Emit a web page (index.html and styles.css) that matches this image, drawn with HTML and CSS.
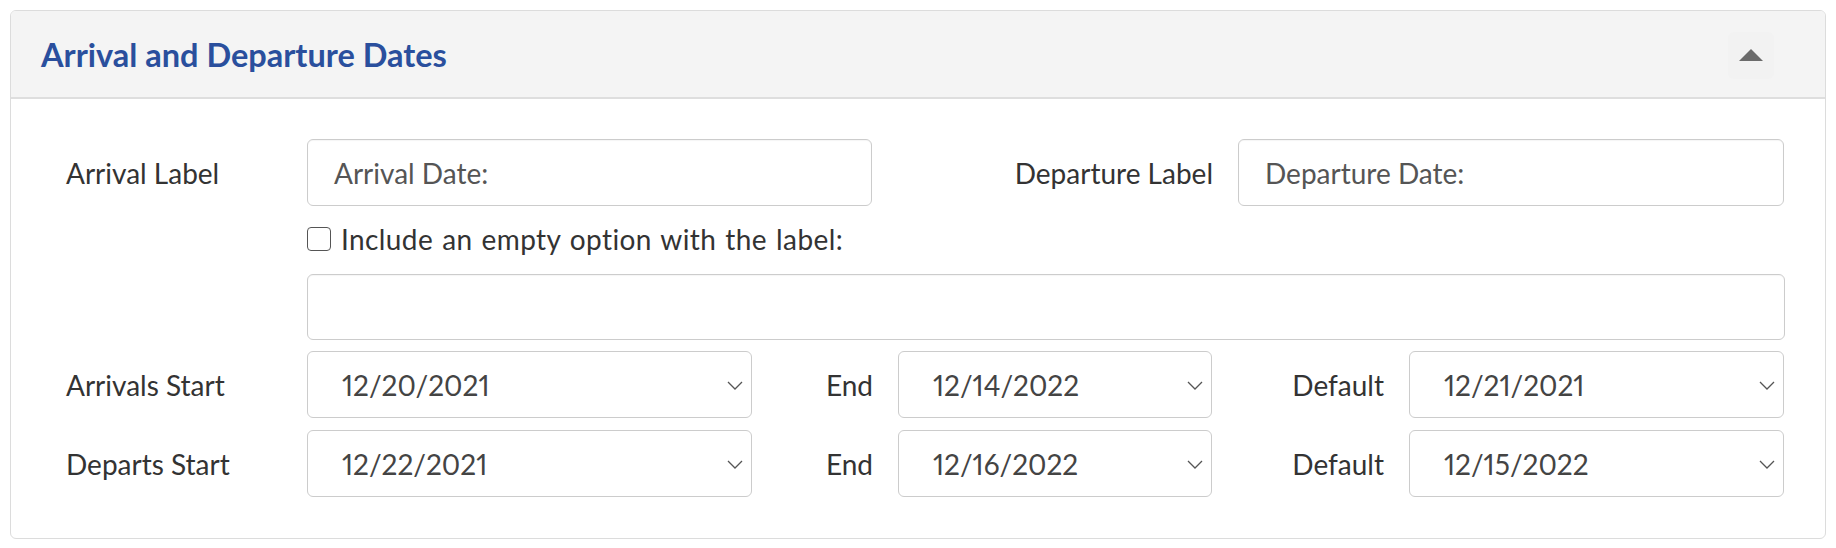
FILE: index.html
```html
<!DOCTYPE html>
<html>
<head>
<meta charset="utf-8">
<link rel="stylesheet" href="styles.css">
</head>
<body>
<div class="panel">
  <div class="panel-head">
    <h2 class="title">Arrival and Departure Dates</h2>
    <button class="collapse" type="button" aria-label="Collapse">
      <svg width="24" height="12" viewBox="0 0 24 12"><polygon points="12,0 24,12 0,12" fill="#6b6b6b"/></svg>
    </button>
  </div>
  <div class="panel-body">
    <div class="row row-labels">
      <label class="lbl">Arrival Label</label>
      <div class="field">Arrival Date:</div>
      <label class="lbl lbl-right">Departure Label</label>
      <div class="field">Departure Date:</div>
    </div>
    <div class="row row-check">
      <span></span>
      <label class="check"><span class="box"></span>Include an empty option with the label:</label>
    </div>
    <div class="row row-empty">
      <span></span>
      <div class="field"></div>
    </div>
    <div class="row row-dates">
      <label class="lbl">Arrivals Start</label>
      <div class="select"><span>12/20/2021</span><svg class="chev" width="16" height="9" viewBox="0 0 16 9"><polyline points="1,1 8,8 15,1" fill="none" stroke="#555" stroke-width="1.3"/></svg></div>
      <label class="lbl lbl-right">End</label>
      <div class="select"><span>12/14/2022</span><svg class="chev" width="16" height="9" viewBox="0 0 16 9"><polyline points="1,1 8,8 15,1" fill="none" stroke="#555" stroke-width="1.3"/></svg></div>
      <label class="lbl lbl-right">Default</label>
      <div class="select"><span>12/21/2021</span><svg class="chev" width="16" height="9" viewBox="0 0 16 9"><polyline points="1,1 8,8 15,1" fill="none" stroke="#555" stroke-width="1.3"/></svg></div>
    </div>
    <div class="row row-dates">
      <label class="lbl">Departs Start</label>
      <div class="select"><span>12/22/2021</span><svg class="chev" width="16" height="9" viewBox="0 0 16 9"><polyline points="1,1 8,8 15,1" fill="none" stroke="#555" stroke-width="1.3"/></svg></div>
      <label class="lbl lbl-right">End</label>
      <div class="select"><span>12/16/2022</span><svg class="chev" width="16" height="9" viewBox="0 0 16 9"><polyline points="1,1 8,8 15,1" fill="none" stroke="#555" stroke-width="1.3"/></svg></div>
      <label class="lbl lbl-right">Default</label>
      <div class="select"><span>12/15/2022</span><svg class="chev" width="16" height="9" viewBox="0 0 16 9"><polyline points="1,1 8,8 15,1" fill="none" stroke="#555" stroke-width="1.3"/></svg></div>
    </div>
  </div>
</div>
</body>
</html>
```

FILE: styles.css
```css
* { box-sizing: border-box; }
html, body { margin: 0; padding: 0; background: #fff; }
body {
  padding: 10px;
  font-family: Lato, "Open Sans", sans-serif;
  color: #333;
}
.panel {
  border: 1px solid #dcdcdc;
  border-radius: 6px;
  width: 1816px;
  height: 529px;
  overflow: hidden;
}
.panel-head {
  height: 88px;
  background: #f4f4f4;
  border-bottom: 2px solid #dedede;
  display: flex;
  align-items: center;
  justify-content: space-between;
  padding: 0 51px 0 30px;
}
.title {
  margin: 0;
  font-size: 32.5px;
  font-weight: 700;
  color: #2a4f9d;
}
.collapse {
  width: 46px;
  height: 47px;
  border: none;
  border-radius: 6px;
  background: #f2f2f2;
  display: flex;
  align-items: center;
  justify-content: center;
  padding: 0;
  margin-top: 2px;
}
.panel-body {
  padding: 40px 40px 40px 55px;
}
.row {
  display: grid;
  align-items: center;
}
.row-labels { grid-template-columns: 241px 565px 366px 546px; }
.row-check { grid-template-columns: 241px 1fr; margin: 16px 0 18px; }
.row-empty { grid-template-columns: 241px 1fr; }
.row-dates { grid-template-columns: 241px 445px 146px 314px 197px 375px; }
.row-empty + .row-dates { margin-top: 11px; }
.row-dates + .row-dates { margin-top: 12px; }
.lbl {
  font-size: 28px;
  color: #333;
}
.lbl-right {
  text-align: right;
  padding-right: 25px;
}
.field {
  height: 67px;
  border: 1.5px solid #ccc;
  border-radius: 6px;
  padding: 0 26px;
  display: flex;
  align-items: center;
  font-size: 28px;
  color: #555;
  box-shadow: inset 0 1px 1px rgba(0,0,0,0.04);
}
.row-empty .field { height: 66px; }
.select {
  height: 67px;
  border: 1.5px solid #ccc;
  border-radius: 6px;
  padding: 0 8px 0 34px;
  display: flex;
  align-items: center;
  justify-content: space-between;
  font-size: 28px;
  font-variant-numeric: proportional-nums;
  color: #444;
}
.chev { display: block; margin-top: 1px; }
.check {
  display: flex;
  align-items: center;
  font-size: 28px;
  letter-spacing: 0.4px;
  word-spacing: 1.5px;
  color: #333;
  line-height: 34px;
}
.box {
  width: 24px;
  height: 24px;
  border: 1.5px solid #555;
  border-radius: 4px;
  margin-right: 10px;
  background: #fff;
}
```
